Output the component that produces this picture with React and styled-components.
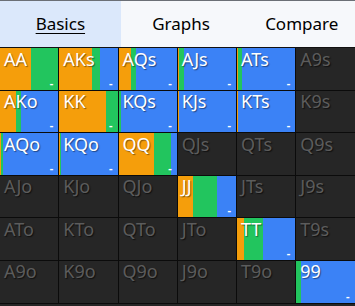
import React from 'react'
import styled, { createGlobalStyle } from 'styled-components'

const GlobalStyle = createGlobalStyle`
  html, body {
    margin: 0;
    padding: 0;
    background: #262626;
    overflow: hidden;
  }
  body {
    font-family: 'Noto Sans', 'Open Sans', sans-serif;
  }
`

const ORANGE = '#f59e0b'
const GREEN = '#22c55e'
const BLUE = '#3b82f6'

// only the part of the 13x13 chart that fits the panel
const RANKS = ['A', 'K', 'Q', 'J', 'T', '9']

// [orange, green, blue] in percent
const MIX = {
  AA: [53, 47, 0],
  AKs: [56, 13, 31],
  AQs: [20, 10, 70],
  AJs: [2, 8, 90],
  ATs: [2, 7, 91],
  AKo: [27, 9, 64],
  KK: [79, 21, 0],
  KQs: [0, 3, 97],
  KJs: [2, 0, 98],
  KTs: [2, 0, 98],
  AQo: [2, 3, 95],
  KQo: [1, 2, 97],
  QQ: [60, 29, 11],
  JJ: [26, 41, 33],
  TT: [12, 32, 56],
  '99': [0, 9, 91],
}

function handName(i, j) {
  if (i === j) return RANKS[i] + RANKS[j]
  if (i < j) return RANKS[i] + RANKS[j] + 's'
  return RANKS[j] + RANKS[i] + 'o'
}

function mixBackground(mix) {
  if (!mix) return '#262626'
  const [o, g] = mix
  return `linear-gradient(to right, ${ORANGE} 0 ${o}%, ${GREEN} ${o}% ${o + g}%, ${BLUE} ${o + g}% 100%)`
}

const Page = styled.div`
  width: 100vw;
  height: 100vh;
  display: flex;
  flex-direction: column;
  background: #262626;
`

const TabBar = styled.div`
  display: flex;
  flex: none;
  height: 46px;
  border-top: 1px solid #6b6f76;
  border-bottom: 1px solid #111;
  background: #f6f8fb;
`

const Tab = styled.div`
  flex: none;
  width: 120.7px;
  display: flex;
  align-items: center;
  justify-content: center;
  background: ${p => (p.$active ? '#dbe8fb' : 'transparent')};
  color: #000;
  font-size: 17px;
  text-decoration: ${p => (p.$active ? 'underline' : 'none')};
  text-underline-offset: 3px;
  text-decoration-thickness: 1px;
  padding-bottom: 1px;
`

const Grid = styled.div`
  display: grid;
  grid-template-columns: repeat(${RANKS.length}, 58.25px);
  grid-auto-rows: 41.6px;
  gap: 1px;
  width: 100%;
  background: #0b0b0b;
  border-bottom: 1px solid #0b0b0b;
`

const Cell = styled.div`
  display: flex;
  flex-direction: column;
  justify-content: space-between;
  padding: 1.5px 5px 2px 4px;
  background: ${p => mixBackground(p.$mix)};
  overflow: hidden;
`

const Label = styled.span`
  font-size: 18px;
  line-height: 1;
  color: ${p => (p.$lit ? '#ffffff' : '#5c5c5c')};
  text-shadow: ${p => (p.$lit ? '1px 1px 1px rgba(0,0,0,0.45)' : '1px 1px 1px #111')};
  white-space: nowrap;
`

const Dash = styled.span`
  align-self: flex-end;
  font-size: 11px;
  line-height: 1;
  color: #fff;
  font-weight: 700;
`

export default function App() {
  const cells = []
  RANKS.forEach((_, i) => {
    RANKS.forEach((__, j) => {
      const name = handName(i, j)
      const mix = MIX[name]
      cells.push(
        <Cell key={name} $mix={mix}>
          <Label $lit={!!mix}>{name}</Label>
          {mix && <Dash>-</Dash>}
        </Cell>
      )
    })
  })

  return (
    <Page>
      <GlobalStyle />
      <TabBar>
        <Tab $active>Basics</Tab>
        <Tab>Graphs</Tab>
        <Tab>Compare</Tab>
      </TabBar>
      <Grid>{cells}</Grid>
    </Page>
  )
}
